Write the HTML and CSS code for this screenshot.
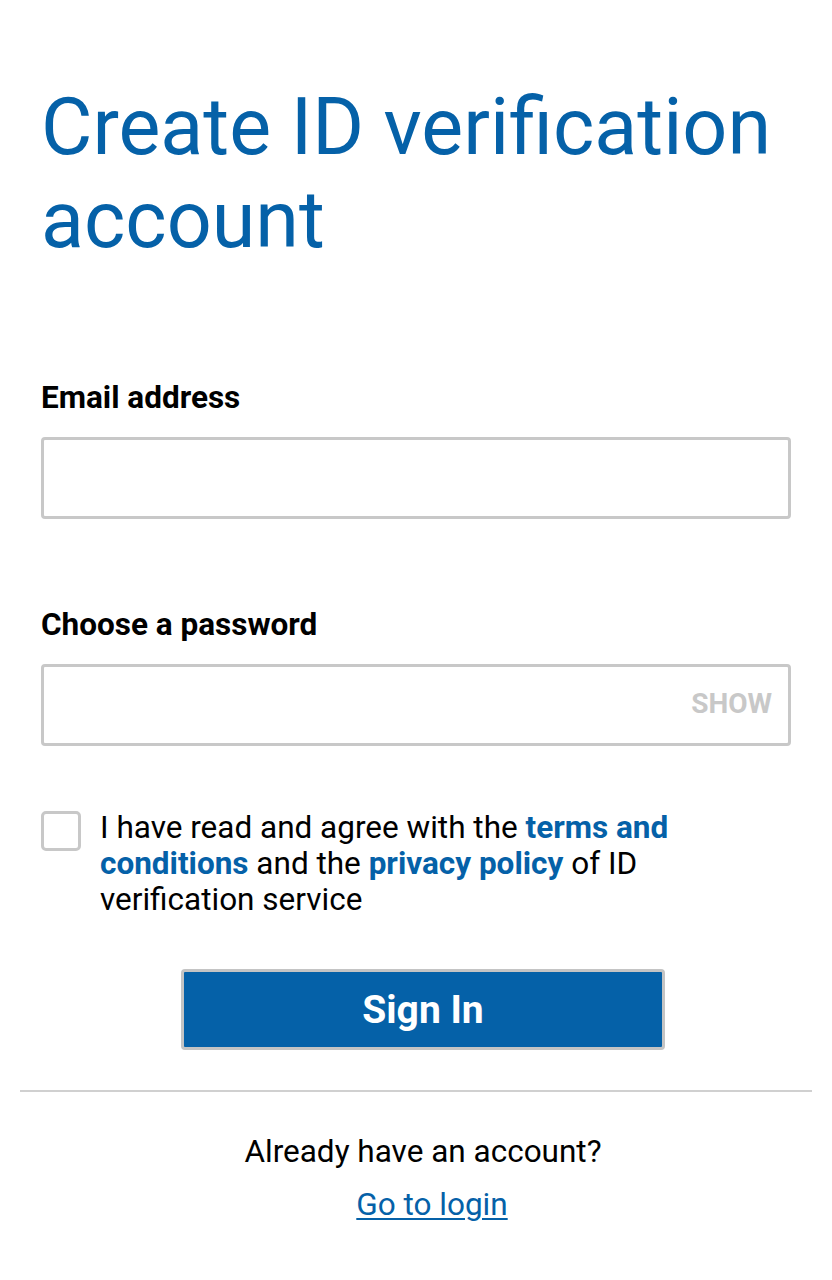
FILE: index.html
```html
<!DOCTYPE html>
<html lang="en">
<head>
<meta charset="utf-8">
<title>Create ID verification account</title>
<link rel="stylesheet" href="styles.css">
</head>
<body>
<main class="page">
  <h1 class="title">Create ID verification account</h1>
  <form class="form">
    <div class="field field-email">
      <label class="label" for="email">Email address</label>
      <input class="input" id="email" type="email">
    </div>
    <div class="field field-pass">
      <label class="label" for="pass">Choose a password</label>
      <div class="input-wrap">
        <input class="input" id="pass" type="password">
        <span class="show">SHOW</span>
      </div>
    </div>
    <div class="agree">
      <span class="checkbox"></span>
      <p class="agree-text">I have read and agree with the <a class="link" href="#">terms and conditions</a> and the <a class="link" href="#">privacy policy</a> of ID verification service</p>
    </div>
    <button class="btn" type="button">Sign In</button>
  </form>
  <hr class="divider">
  <div class="footer">
    <p class="already">Already have an account?</p>
    <a class="login" href="#">Go to login</a>
  </div>
</main>
</body>
</html>
```
FILE: styles.css
```css
* { box-sizing: border-box; }
html, body { margin: 0; padding: 0; background: #fff; }
body { font-family: Roboto, "Liberation Sans", sans-serif; color: #000; }
.page { width: 832px; padding: 81px 20px 0; }
.title {
  margin: 0 21px;
  font-size: 79px;
  line-height: 93px;
  font-weight: 400;
  color: #0561a8;
}
.form { padding: 0 21px; }
.field { display: flex; flex-direction: column; }
.field-email { margin-top: 113px; }
.field-pass { margin-top: 88px; }
.label { font-size: 31.5px; font-weight: 700; line-height: 36px; margin-bottom: 21px; }
.input-wrap { position: relative; }
.input {
  width: 100%;
  height: 82px;
  border: 3px solid #c8c8c8;
  border-radius: 4px;
  background: #fff;
  font: inherit;
  outline: none;
  display: block;
}
.show {
  position: absolute;
  right: 19px;
  top: 50%;
  transform: translateY(-54%);
  font-size: 28px;
  font-weight: 700;
  color: #c8c8c8;
}
.agree { display: flex; gap: 19px; margin-top: 65px; align-items: flex-start; }
.checkbox {
  flex: none;
  width: 40px;
  height: 40px;
  border: 3px solid #c8c8c8;
  border-radius: 5px;
}
.agree-text { margin: -1px 0 0; max-width: 600px; font-size: 31.5px; line-height: 36px; }
.link { color: #0561a8; font-weight: 700; text-decoration: none; }
.btn {
  display: block;
  margin: 51px 0 0 140px;
  width: 484px;
  height: 81px;
  background: #0561a8;
  border: 3px solid #c4c4c4;
  border-radius: 4px;
  color: #fff;
  font-family: inherit;
  font-size: 39px;
  font-weight: 700;
}
.divider { margin: 40px 0 0; border: 0; border-top: 2px solid #d0d0d0; }
.footer { display: flex; flex-direction: column; align-items: center; padding-left: 14px; }
.already { margin: 42px 0 0; font-size: 31.5px; line-height: 36px; }
.login { margin: 17px 0 0 18px; font-size: 31.5px; line-height: 36px; color: #0561a8; text-decoration: underline; text-underline-offset: 3px; text-decoration-thickness: 2px; }
```
